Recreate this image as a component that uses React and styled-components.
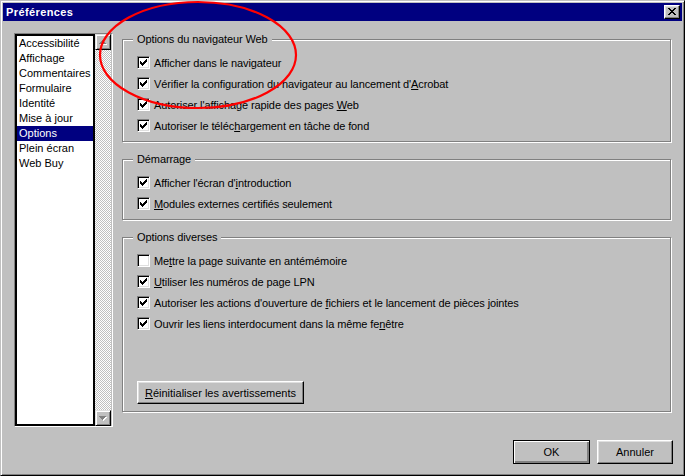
import React from 'react';
import styled, { createGlobalStyle } from 'styled-components';

const GlobalStyle = createGlobalStyle`
  * { box-sizing: border-box; }
  html, body { margin: 0; padding: 0; background: #c0c0c0; }
  body {
    font-family: "Liberation Sans", Arial, sans-serif;
    font-size: 11px;
    color: #000;
  }
`;

const Screen = styled.div`
  position: relative;
  width: 685px;
  height: 476px;
`;

const Window = styled.div`
  width: 685px;
  height: 476px;
  background: #c0c0c0;
  border: 1px solid;
  border-color: #c0c0c0 #000 #000 #c0c0c0;
  box-shadow: inset 1px 1px 0 #fff, inset -1px -1px 0 #808080;
  padding: 2px;
  display: flex;
  flex-direction: column;
`;

const TitleBar = styled.div`
  height: 18px;
  background: #000080;
  display: flex;
  align-items: center;
  justify-content: space-between;
  padding: 0 2px 0 3px;
`;

const Title = styled.span`
  color: #fff;
  font-weight: bold;
  font-size: 11px;
  letter-spacing: 0.4px;
`;

const CaptionButton = styled.div`
  width: 16px;
  height: 14px;
  background: #c0c0c0;
  border: 1px solid;
  border-color: #fff #000 #000 #fff;
  box-shadow: inset -1px -1px 0 #808080, inset 1px 1px 0 #dfdfdf;
  padding: 2px 0 0 3px;
  display: flex;
  align-items: flex-start;
`;

const Main = styled.div`
  display: flex;
  padding: 12px 11px 0 11px;
`;

const ListFrame = styled.div`
  width: 99px;
  height: 394px;
  border: 1px solid;
  border-color: #808080 #fff #fff #808080;
  display: flex;
  padding-right: 1px;
  background: #c0c0c0;
`;

const List = styled.div`
  width: 80px;
  border: 2px solid #000;
  background: #fff;
  display: flex;
  flex-direction: column;
`;

const Item = styled.div`
  height: 15px;
  line-height: 15px;
  padding-left: 2px;
  white-space: nowrap;
  background: ${(p) => (p.$selected ? '#000080' : 'transparent')};
  color: ${(p) => (p.$selected ? '#fff' : '#000')};
`;

const ScrollBar = styled.div`
  width: 16px;
  display: flex;
  flex-direction: column;
  justify-content: space-between;
  background: repeating-conic-gradient(#c0c0c0 0 25%, #fff 0 50%) 0 0 / 2px 2px;
`;

const ScrollButton = styled.div`
  width: 16px;
  height: 16px;
  background: #c0c0c0;
  border: 1px solid;
  border-color: #dfdfdf #000 #000 #dfdfdf;
  box-shadow: inset 1px 1px 0 #fff, inset -1px -1px 0 #808080;
  display: flex;
  align-items: center;
  justify-content: center;
`;

const Column = styled.div`
  flex: 1;
  margin-left: 9px;
  display: flex;
  flex-direction: column;
`;

const Group = styled.fieldset`
  margin: ${(p) => (p.$first ? '0' : '11px')} 0 0 0;
  padding: ${(p) => p.$top}px 0 ${(p) => p.$bottom}px 14px;
  border: 1px solid #808080;
  box-shadow: inset 1px 1px 0 #fff, 1px 1px 0 #fff;
  min-width: 0;
  letter-spacing: -0.1px;
`;

const Legend = styled.legend`
  padding: 0 4px;
  margin-left: -4px;
  line-height: 13px;
  background: #c0c0c0;
`;

const Row = styled.div`
  height: 21px;
  display: flex;
  align-items: center;
  white-space: nowrap;
`;

const Box = styled.span`
  width: 13px;
  height: 13px;
  flex: none;
  background: #fff;
  border: 1px solid;
  border-color: #808080 #fff #fff #808080;
  box-shadow: inset 1px 1px 0 #000, inset -1px -1px 0 #dfdfdf;
  padding: 2px 0 0 2px;
  display: flex;
  align-items: flex-start;
  margin-right: 4px;
`;

const Key = styled.span`
  text-decoration: underline;
  text-underline-offset: 1px;
`;

const Button = styled.button`
  font: inherit;
  color: #000;
  width: ${(p) => p.$w}px;
  height: ${(p) => p.$h}px;
  background: #c0c0c0;
  border: 1px solid;
  border-color: #fff #000 #000 #fff;
  box-shadow: inset -1px -1px 0 #808080, inset 1px 1px 0 #dfdfdf;
  padding: 0;
  margin: 0;
  display: flex;
  align-items: center;
  justify-content: center;
  outline: none;
`;

const DefaultButton = styled(Button)`
  border-color: #000;
  box-shadow: inset 1px 1px 0 #fff, inset -1px -1px 0 #808080, inset -2px -2px 0 #808080;
`;

const ResetButton = styled(Button)`
  margin-top: 47px;
`;

const Footer = styled.div`
  display: flex;
  justify-content: flex-end;
  gap: 7px;
  padding: 13px 9px 0 0;
`;

const Overlay = styled.svg`
  position: absolute;
  top: 0;
  left: 0;
  pointer-events: none;
`;

const CHECK =
  'M6 0h1v1h-1z M5 1h2v1h-2z M0 2h1v1h-1z M4 2h3v1h-3z M0 3h2v1h-2z M3 3h3v1h-3z M0 4h5v1h-5z M1 5h3v1h-3z M2 6h1v1h-1z';
const CLOSE =
  'M0 0h2v1H0z M6 0h2v1H6z M1 1h2v1H1z M5 1h2v1H5z M2 2h4v1H2z M3 3h2v1H3z M2 4h4v1H2z M1 5h2v1H1z M5 5h2v1H5z M0 6h2v1H0z M6 6h2v1H6z';
const UP = 'M3 0h1v1H3z M2 1h3v1H2z M1 2h5v1H1z M0 3h7v1H0z';
const DOWN = 'M0 0h7v1H0z M1 1h5v1H1z M2 2h3v1H2z M3 3h1v1H3z';

const Check = ({ on }) => (
  <Box>
    {on && (
      <svg width="7" height="7" viewBox="0 0 7 7" shapeRendering="crispEdges">
        <path d={CHECK} fill="#000" />
      </svg>
    )}
  </Box>
);

const Arrow = ({ d }) => (
  <svg width="8" height="5" viewBox="0 0 8 5" shapeRendering="crispEdges">
    <path d={d} fill="#fff" transform="translate(1,1)" />
    <path d={d} fill="#808080" />
  </svg>
);

const Option = ({ on = true, children }) => (
  <Row>
    <Check on={on} />
    <span>{children}</span>
  </Row>
);

const items = [
  'Accessibilité',
  'Affichage',
  'Commentaires',
  'Formulaire',
  'Identité',
  'Mise à jour',
  'Options',
  'Plein écran',
  'Web Buy',
];

export default function App() {
  return (
    <Screen>
      <GlobalStyle />
      <Window>
        <TitleBar>
          <Title>Préférences</Title>
          <CaptionButton>
            <svg width="8" height="7" viewBox="0 0 8 7" shapeRendering="crispEdges">
              <path d={CLOSE} fill="#000" />
            </svg>
          </CaptionButton>
        </TitleBar>
        <Main>
          <ListFrame>
            <List>
              {items.map((it) => (
                <Item key={it} $selected={it === 'Options'}>
                  {it}
                </Item>
              ))}
            </List>
            <ScrollBar>
              <ScrollButton>
                <Arrow d={UP} />
              </ScrollButton>
              <ScrollButton>
                <Arrow d={DOWN} />
              </ScrollButton>
            </ScrollBar>
          </ListFrame>
          <Column>
            <Group $first $top={6} $bottom={5}>
              <Legend>Options du navigateur Web</Legend>
              <Option>Afficher dans le navigateur</Option>
              <Option>
                Vérifier la configuration du navigateur au lancement d'<Key>A</Key>crobat
              </Option>
              <Option>
                Autoriser l'affichage rapide des pages <Key>W</Key>eb
              </Option>
              <Option>
                Autoriser le téléc<Key>h</Key>argement en tâche de fond
              </Option>
            </Group>
            <Group $top={6} $bottom={5}>
              <Legend>Démarrage</Legend>
              <Option>
                Afficher l'écran d'<Key>i</Key>ntroduction
              </Option>
              <Option>
                <Key>M</Key>odules externes certifiés seulement
              </Option>
            </Group>
            <Group $top={6} $bottom={7}>
              <Legend>Options diverses</Legend>
              <Option on={false}>
                Me<Key>t</Key>tre la page suivante en antémémoire
              </Option>
              <Option>
                <Key>U</Key>tiliser les numéros de page LPN
              </Option>
              <Option>
                Autoriser les actions d'ouverture de <Key>f</Key>ichiers et le lancement de pièces jointes
              </Option>
              <Option>
                Ouvrir les liens interdocument dans la même fe<Key>n</Key>être
              </Option>
              <ResetButton $w={167} $h={23}>
                <span>
                  <Key>R</Key>éinitialiser les avertissements
                </span>
              </ResetButton>
            </Group>
          </Column>
        </Main>
        <Footer>
          <DefaultButton $w={77} $h={24}>OK</DefaultButton>
          <Button $w={76} $h={24}>Annuler</Button>
        </Footer>
      </Window>
      <Overlay width="685" height="476" viewBox="0 0 685 476">
        <ellipse cx="198" cy="55" rx="98" ry="53" fill="none" stroke="#ff0000" strokeWidth="2.2" />
      </Overlay>
    </Screen>
  );
}
